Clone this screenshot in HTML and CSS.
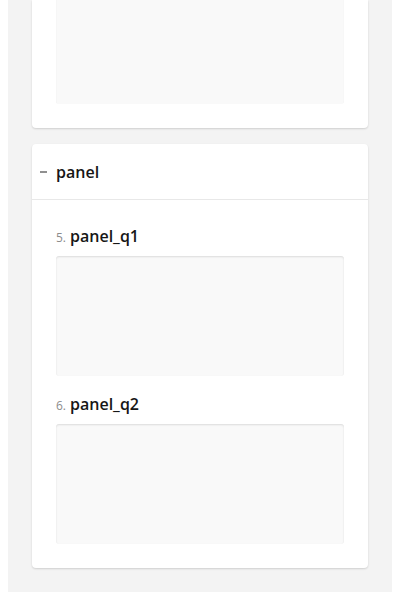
FILE: index.html
```html
<!DOCTYPE html>
<html>
<head>
<meta charset="utf-8">
<link rel="stylesheet" href="styles.css">
</head>
<body>
<div class="page">
  <div class="card card-cut">
    <div class="field field-cut"></div>
  </div>
  <div class="card">
    <div class="panel-header">
      <span class="collapse-icon"></span>
      <span class="panel-title">panel</span>
    </div>
    <div class="panel-body">
      <div class="question">
        <div class="q-title"><span class="q-num">5.</span><span class="q-text">panel_q1</span></div>
        <div class="field"></div>
      </div>
      <div class="question">
        <div class="q-title"><span class="q-num">6.</span><span class="q-text">panel_q2</span></div>
        <div class="field"></div>
      </div>
    </div>
  </div>
</div>
</body>
</html>
```
FILE: styles.css
```css
html, body {
  margin: 0;
  padding: 0;
  background: #ffffff;
}
body {
  padding: 0 8px 8px 8px;
  font-family: "Open Sans", "Liberation Sans", sans-serif;
  color: #161616;
}
.page {
  background: #f3f3f3;
  padding: 0 24px 24px 24px;
  display: flex;
  flex-direction: column;
  gap: 16px;
}
.card {
  background: #ffffff;
  border-radius: 4px;
  box-shadow: 0 1px 2px rgba(0, 0, 0, 0.15);
}
.card-cut {
  border-radius: 0 0 4px 4px;
  padding: 0 24px 24px 24px;
}
.field {
  height: 120px;
  background: #f9f9f9;
  border-radius: 3px;
  box-shadow: inset 0 1px 2px rgba(0, 0, 0, 0.12);
}
.field-cut {
  height: 104px;
  border-radius: 0 0 3px 3px;
  box-shadow: inset 1px 0 1px -1px rgba(0, 0, 0, 0.12), inset -1px 0 1px -1px rgba(0, 0, 0, 0.08);
}
.panel-header {
  display: flex;
  align-items: center;
  height: 56px;
  padding: 0 24px 0 8px;
  border-bottom: 1px solid #e8e8e8;
  box-sizing: border-box;
}
.collapse-icon {
  display: block;
  width: 7px;
  height: 2px;
  background: #909090;
  margin: 0 9px 0 0;
}
.panel-title {
  font-size: 16px;
  font-weight: 600;
  line-height: 24px;
}
.panel-body {
  padding: 24px;
  display: flex;
  flex-direction: column;
  gap: 16px;
}
.q-title {
  height: 24px;
  line-height: 24px;
  margin-bottom: 8px;
  white-space: nowrap;
  overflow: hidden;
}
.q-num {
  font-size: 12px;
  line-height: 24px;
  color: #8c8c8c;
  margin-right: 4px;
  font-weight: 400;
}
.q-text {
  font-size: 16px;
  line-height: 24px;
  font-weight: 600;
}
```
